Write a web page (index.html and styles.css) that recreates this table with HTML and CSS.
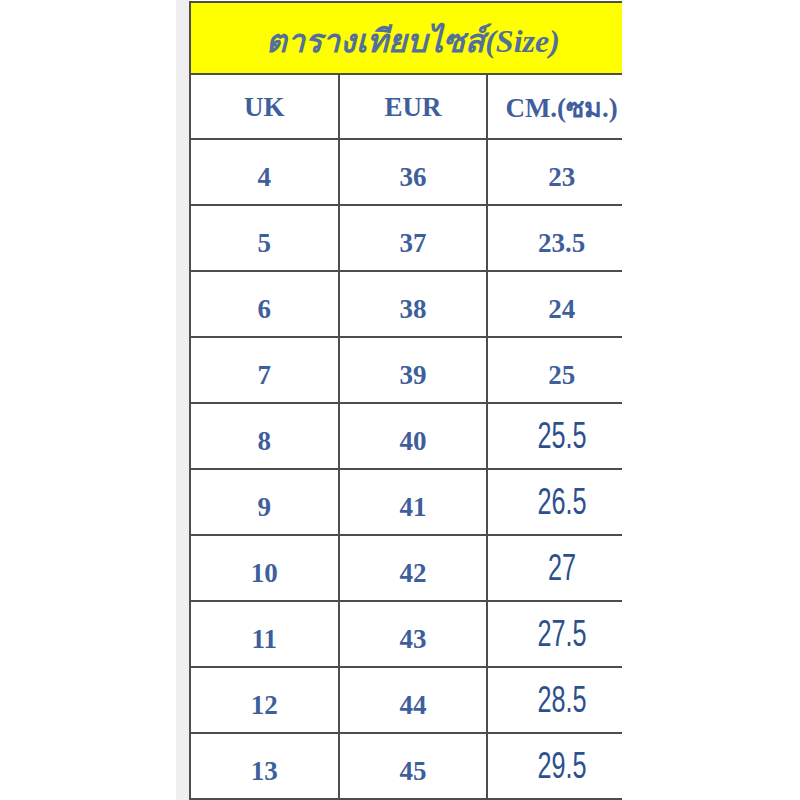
FILE: index.html
```html
<!DOCTYPE html>
<html lang="th">
<head>
<meta charset="utf-8">
<title>ตารางเทียบไซส์</title>
<link rel="stylesheet" href="styles.css">
</head>
<body>
<div class="page">
  <div class="strip"></div>
  <div class="frame">
    <table class="chart">
      <tr><td class="title" colspan="3">ตารางเทียบไซส์(Size)</td></tr>
      <tr class="head"><td>UK</td><td>EUR</td><td>CM.(ซม.)</td></tr>
      <tr><td>4</td><td>36</td><td>23</td></tr>
      <tr><td>5</td><td>37</td><td>23.5</td></tr>
      <tr><td>6</td><td>38</td><td>24</td></tr>
      <tr><td>7</td><td>39</td><td>25</td></tr>
      <tr><td>8</td><td>40</td><td class="sans"><span>25.5</span></td></tr>
      <tr><td>9</td><td>41</td><td class="sans"><span>26.5</span></td></tr>
      <tr><td>10</td><td>42</td><td class="sans"><span>27</span></td></tr>
      <tr><td>11</td><td>43</td><td class="sans"><span>27.5</span></td></tr>
      <tr><td>12</td><td>44</td><td class="sans"><span>28.5</span></td></tr>
      <tr><td>13</td><td>45</td><td class="sans"><span>29.5</span></td></tr>
    </table>
  </div>
</div>
</body>
</html>
```
FILE: styles.css
```css
html, body {
  margin: 0;
  padding: 0;
  background: #ffffff;
}
.page {
  display: flex;
  height: 800px;
  padding-left: 176px;
  overflow: hidden;
}
.strip {
  width: 13px;
  background: #efefef;
  flex: none;
}
.frame {
  width: 433px;
  overflow: hidden;
  padding-top: 1px;
  flex: none;
}
.chart {
  border-collapse: separate;
  border-spacing: 0;
  width: 448px;
  table-layout: fixed;
  border-left: 2px solid #4d4d4d;
  border-top: 2px solid #4d4d4d;
  font-family: "Liberation Serif", "Times New Roman", serif;
  font-weight: bold;
  color: #3f5f9c;
}
.chart td {
  box-sizing: border-box;
  border-right: 2px solid #4d4d4d;
  border-bottom: 2px solid #4d4d4d;
  text-align: center;
  vertical-align: middle;
  height: 66px;
  font-size: 27px;
  padding: 10px 0 0 0;
  width: 149px;
}
.chart td.title {
  background: #ffff00;
  height: 72px;
  padding: 4px 0 0 0;
  font-style: italic;
  font-size: 32px;
  color: #52709a;
}
.chart tr.head td {
  height: 65px;
  padding: 1px 0 0 0;
}
.chart td.sans {
  font-family: "Liberation Sans", Arial, sans-serif;
  font-weight: normal;
  color: #2d4f8d;
  padding: 0;
}
.chart td.sans span {
  display: inline-block;
  font-size: 36px;
  transform: scaleX(0.7);
}
```
